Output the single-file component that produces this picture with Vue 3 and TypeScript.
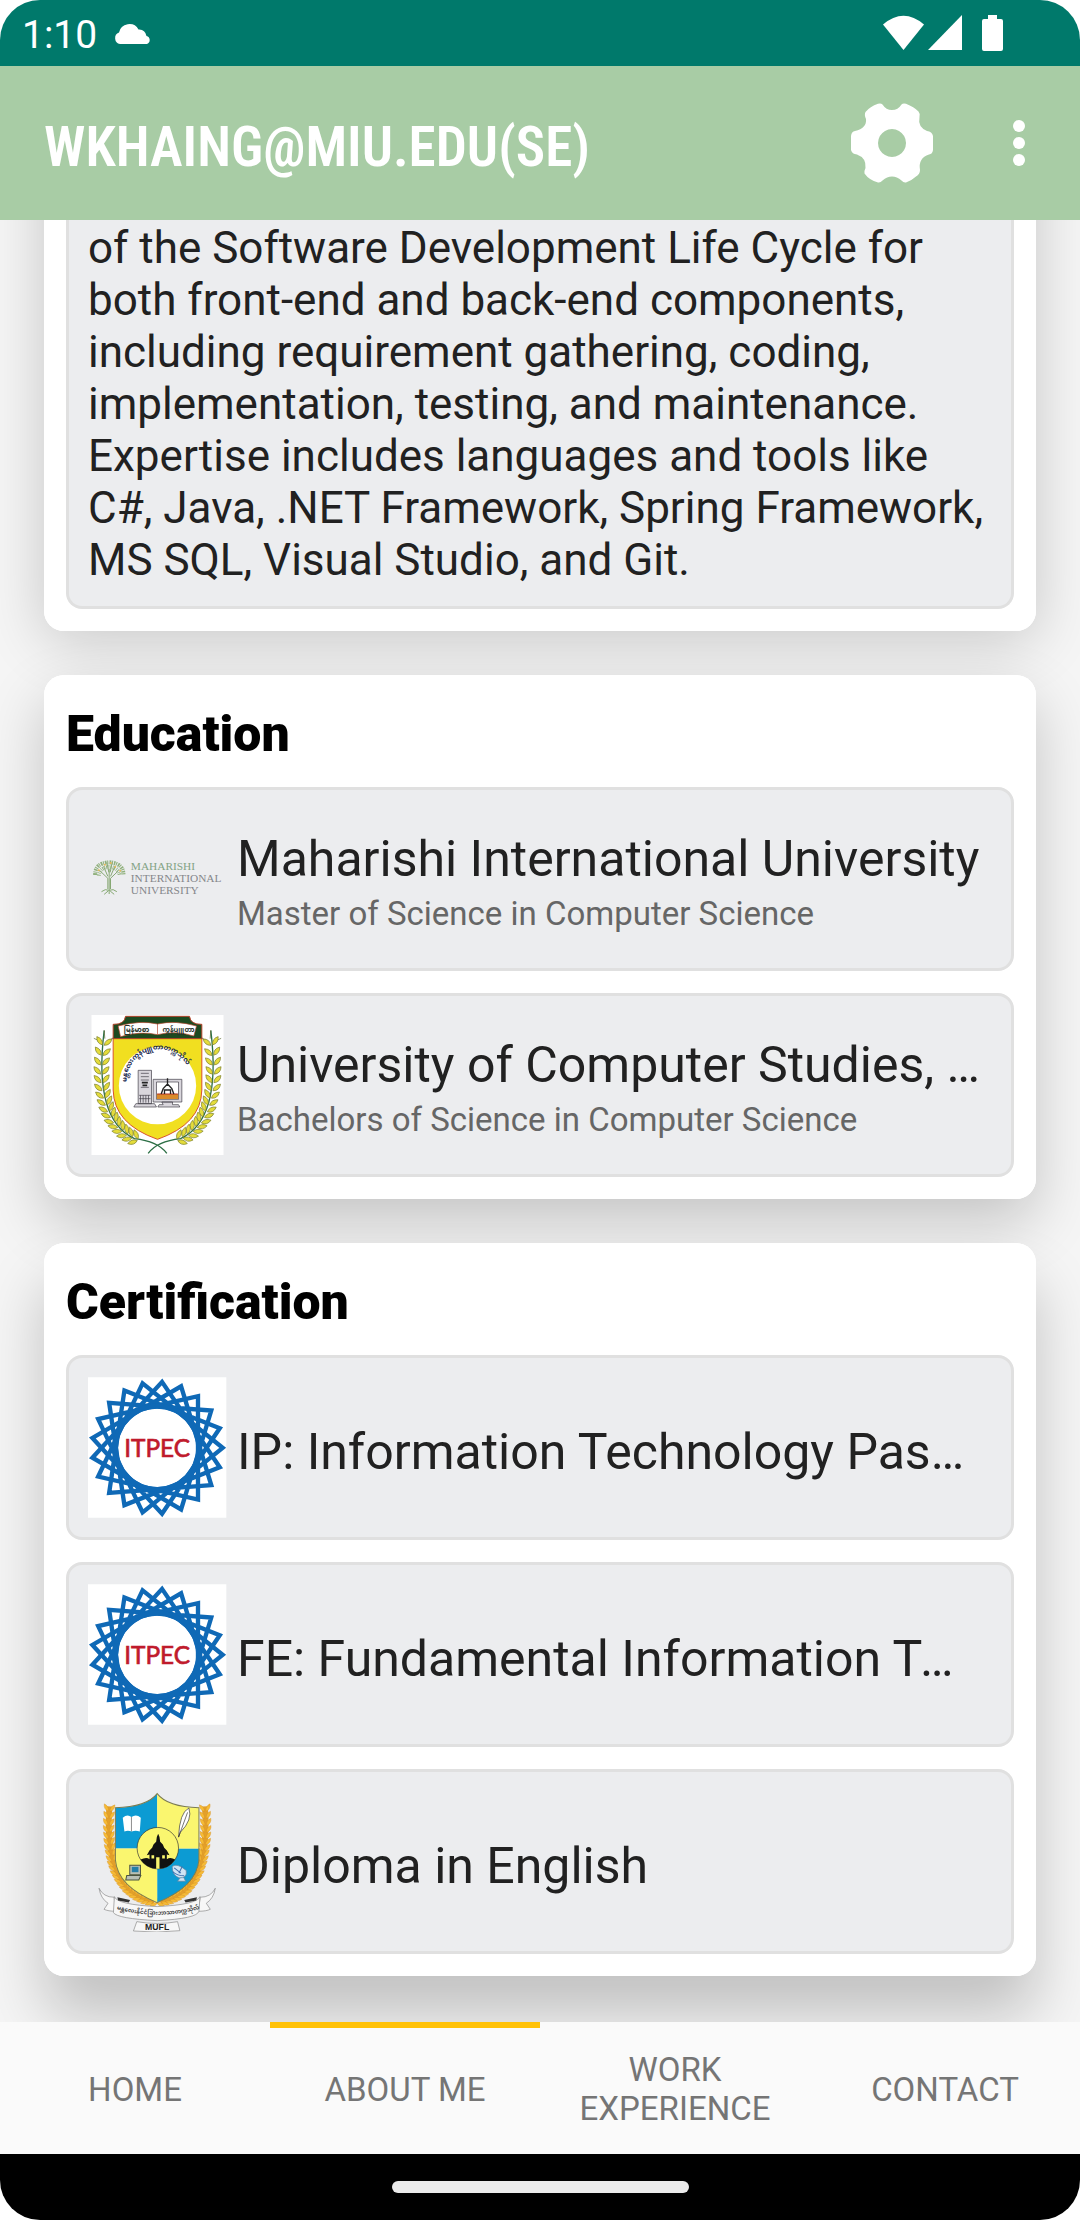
<script setup lang="ts">
import { ref } from 'vue'

interface Entry {
  logo: 'miu' | 'ucs' | 'itpec' | 'mufl'
  title: string
  detail?: string
}

interface Section {
  heading: string
  entries: Entry[]
}

const summary: string[] = [
  'of the Software Development Life Cycle for',
  'both front-end and back-end components,',
  'including requirement gathering, coding,',
  'implementation, testing, and maintenance.',
  'Expertise includes languages and tools like',
  'C#, Java, .NET Framework, Spring Framework,',
  'MS SQL, Visual Studio, and Git.',
]

const sections: Section[] = [
  {
    heading: 'Education',
    entries: [
      { logo: 'miu', title: 'Maharishi International University', detail: 'Master of Science in Computer Science' },
      { logo: 'ucs', title: 'University of Computer Studies, Mandalay', detail: 'Bachelors of Science in Computer Science' },
    ],
  },
  {
    heading: 'Certification',
    entries: [
      { logo: 'itpec', title: 'IP: Information Technology Passport' },
      { logo: 'itpec', title: 'FE: Fundamental Information Technology Engineer' },
      { logo: 'mufl', title: 'Diploma in English' },
    ],
  },
]

const tabs: string[] = ['HOME', 'ABOUT ME', 'WORK EXPERIENCE', 'CONTACT']
const active = ref(1)

// ITPEC mark: three interlaced heptagrams, 21 tips in all
const heptagrams: string[] = [0, 1, 2].map((g) =>
  Array.from({ length: 7 }, (_, i) => {
    const a = ((g + i * 6) * 2 * Math.PI) / 21
    return `${(207 + 196 * Math.cos(a)).toFixed(1)},${(211 + 198 * Math.sin(a)).toFixed(1)}`
  }).join(' '),
)

interface Leaf { x: number; y: number; r: number }

// Points along a quadratic curve with a pair of leaves at each of them
function wreath(p: number[], n: number, spread: number, gap: number): Leaf[] {
  const out: Leaf[] = []
  for (let i = 0; i < n; i++) {
    const t = i / (n - 1)
    const u = 1 - t
    const x = u * u * p[0] + 2 * u * t * p[2] + t * t * p[4]
    const y = u * u * p[1] + 2 * u * t * p[3] + t * t * p[5]
    const dx = 2 * u * (p[2] - p[0]) + 2 * t * (p[4] - p[2])
    const dy = 2 * u * (p[3] - p[1]) + 2 * t * (p[5] - p[3])
    const a = Math.atan2(dy, dx)
    for (const s of [-1, 1]) {
      out.push({
        x: Math.round(x - Math.sin(a) * gap * s),
        y: Math.round(y + Math.cos(a) * gap * s),
        r: Math.round((a * 180) / Math.PI + 180 - spread * s),
      })
    }
  }
  return out
}

const ucsLeaves = wreath([70, 125, 38, 360, 162, 415], 16, 42, 12)
const muflLeaves = wreath([88, 95, 70, 350, 222, 374], 24, 32, 9)
</script>

<template>
  <div class="screen">
    <header class="status">
      <span class="clock">1:10</span>
      <svg class="cloud" viewBox="0 0 37 21"><path d="M6 21A6 6 0 0 1 5 9.500A10.500 10.500 0 0 1 24.500 6.500Q31 6 32.500 13A4.200 4.200 0 0 1 33 21Z" fill="#fff" /></svg>
      <svg class="signals" viewBox="0 0 120 37" fill="#fff">
        <path d="M0 9.500Q20.500 -8 41 9.500L20.500 35Z" />
        <path d="M79 0V35H45Z" />
        <path d="M105 0h9v4h4q2 0 2 2v28q0 2 -2 2h-17q-2 0 -2 -2v-28q0 -2 2 -2h4z" />
      </svg>
    </header>

    <div class="appbar">
      <h1>WKHAING@MIU.EDU(SE)</h1>
      <button class="icon gear" aria-label="Settings">
        <svg viewBox="0 0 82 80">
          <path fill="#fff" fill-rule="evenodd" d="M27 0.800Q30 0 31.500 1.500Q35 7 41 7T50.500 1.500Q52 0 55 0.800Q63 4 67.500 8.500Q69.500 11 68.500 14Q66.500 24 76 28Q81 28.500 82 33V47Q81.500 51 78 51.500Q67 55 69 67Q69 71 65 73.500Q60 78 55 79.500Q52.500 80 50.500 77.500Q46 73.500 41 73.500T31.500 77.500Q29.500 80 27 79.500Q18 77 13.500 70.500Q13 68 14.500 65Q15.500 55 6 51.500Q1 51 0 47V33Q0.500 28.500 4 28Q16 25 15 16Q13 12 14.500 9Q19 3.500 27 0.800ZM41 26a14 14 0 1 0 .01 0z" />
        </svg>
      </button>
      <button class="icon more" aria-label="More options">
        <svg viewBox="0 0 12 46" fill="#fff"><circle cx="6" cy="6" r="6" /><circle cx="6" cy="23" r="6" /><circle cx="6" cy="40" r="6" /></svg>
      </button>
    </div>

    <main class="content">
      <section class="card scrolled">
        <p class="box summary"><span v-for="line in summary" :key="line">{{ line }}</span></p>
      </section>

      <section v-for="s in sections" :key="s.heading" class="card">
        <h2>{{ s.heading }}</h2>
        <ul>
          <li v-for="e in s.entries" :key="e.title" class="box entry">
            <svg v-if="e.logo === 'miu'" class="logo" viewBox="22 0 416 420" role="img" aria-label="Maharishi International University">
              <g transform="translate(0 90)">
                <g fill="none" stroke="#86a873" stroke-width="3">
                  <path d="M85 165V90M81 150V118L58 96M89 150V118L112 96M81 112L68 82M89 112L102 82M84 100L78 70M88 100L94 70" />
                  <path d="M62 158q12 -10 22 -4q14 -6 24 4M70 166l12 -10M100 166l-12 -10" />
                </g>
                <g fill="none" stroke="#8fb07c" stroke-width="12" stroke-dasharray="5 2 3 3">
                  <path d="M43 108Q42 72 85 70Q128 72 128 108" />
                  <path d="M54 110Q56 86 85 84Q114 86 117 110" stroke-dasharray="3 4 2 3" />
                </g>
                <g fill="#e5b95a"><circle cx="54" cy="94" r="3" /><circle cx="72" cy="77" r="3" /><circle cx="90" cy="72" r="3" /><circle cx="103" cy="83" r="3" /><circle cx="118" cy="95" r="3" /></g>
                <g class="serif" font-size="34">
                  <text x="150" y="92" fill="#83a384">MAHARISHI</text>
                  <text x="150" y="128" fill="#85878b">INTERNATIONAL</text>
                  <text x="150" y="164" fill="#85878b">UNIVERSITY</text>
                </g>
              </g>
            </svg>

            <svg v-else-if="e.logo === 'ucs'" class="logo" viewBox="23 45 416 420" role="img" aria-label="University of Computer Studies">
              <path fill="#fff" d="M33 45h396v420h-396z" />
              <path d="M98 112H364V270Q362 372 231 418Q100 372 98 270Z" fill="#f1df20" stroke="#d9522b" stroke-width="3" />
              <path d="M98 116V73Q132 74 135 49H327Q330 74 364 73V116Z" fill="#1d4a20" stroke="#b5432a" stroke-width="3" />
              <path d="M113 78Q180 60 231 72Q285 60 348 78L340 108Q285 90 231 104Q180 92 120 110Z" fill="#fff" stroke="#b5432a" stroke-width="2" />
              <path d="M231 72V104" stroke="#b5432a" stroke-width="2" />
              <g class="burmese" font-size="20" font-weight="700" fill="#26332c">
                <text x="130" y="97">မြန်မာစာ</text>
                <text x="246" y="95">ကွန်ပျူတာ</text>
              </g>
              <circle cx="231" cy="257" r="116" fill="#fff" />
              <path id="ucs-arc" d="M138 246A98 98 0 0 1 334 246" fill="none" />
              <text class="burmese" font-size="20" font-weight="700" fill="#16264f"><textPath href="#ucs-arc">မန္တလေးကွန်ပျူတာတက္ကသိုလ်</textPath></text>
              <g fill="#d9d6dc" stroke="#3c3a44" stroke-width="2">
                <path d="M173 211h40v100h-40zM166 311h56l6 10h-68zM218 238h86v68h-86zM244 306h32v8h18l4 7h-66l4 -7h12z" />
                <path d="M228 246h66v52h-66z" fill="#fff" />
                <path d="M181 220h24M181 230h24M181 240h24M181 262h24M176 286h34M176 296h34M180 286v22M188 286v22M196 286v22M204 286v22" />
              </g>
              <path d="M184 248h18M186 256h14" stroke="#222" stroke-width="5" />
              <path d="M229 282h64v15h-64z" fill="#d98b2b" />
              <path d="M230 282h62" stroke="#b32d20" stroke-width="3" />
              <path d="M261 235v20M242 282l6 -16 13 -14 13 14 6 16M252 282v-12h18v12" fill="none" stroke="#222" stroke-width="4" />
              <g v-for="side in [0, 1]" :key="side" :transform="side ? 'translate(462 0) scale(-1 1)' : ''">
                <path d="M71 92Q38 360 162 416Q232 424 259 460" fill="none" stroke="#2c6f45" stroke-width="4" />
                <path d="M71 90l2 26M40 115l22 10M98 115l-18 8" stroke="#55632a" stroke-width="2" />
                <path v-for="(l, i) in ucsLeaves" :key="i" d="M-14 0Q0 -13 16 0Q0 12 -14 0Z" :transform="`translate(${l.x} ${l.y}) rotate(${l.r})`" fill="#e4dc3a" stroke="#7d8130" stroke-width="2" />
              </g>
            </svg>

            <svg v-else-if="e.logo === 'itpec'" class="logo" viewBox="0 0 416 420" role="img" aria-label="ITPEC">
              <path fill="#fff" d="M0 0h414v420H0z" />
              <g fill="none" stroke="#0f69b6" stroke-width="13">
                <polygon v-for="h in heptagrams" :key="h" :points="h" />
                <circle cx="207" cy="211" r="125" stroke-width="16" />
              </g>
              <text class="humanist" x="207" y="237" font-size="73" text-anchor="middle" fill="#c01a2c" stroke="#c01a2c" stroke-width="2">ITPEC</text>
            </svg>

            <svg v-else class="logo" viewBox="24 45 416 420" role="img" aria-label="MUFL">
              <g v-for="side in [0, 1]" :key="side" :transform="side ? 'translate(462 0) scale(-1 1)' : ''">
                <path d="M88 90Q70 350 222 374" fill="none" stroke="#e3a02a" stroke-width="18" />
                <path v-for="(l, i) in muflLeaves" :key="i" d="M-12 0Q0 -10 13 0Q0 9 -12 0Z" :transform="`translate(${l.x} ${l.y}) rotate(${l.r})`" fill="#f6bb35" stroke="#d08a22" stroke-width="1" />
              </g>
              <clipPath id="mufl-shield"><path d="M231 52Q262 92 356 94V250Q350 330 231 378Q112 330 106 250V94Q200 92 231 52Z" /></clipPath>
              <g clip-path="url(#mufl-shield)">
                <path d="M100 45h131v171H100zM231 216h131v170H231z" fill="#0c9bd3" />
                <path d="M231 45h131v171H231zM100 216h131v170H100z" fill="#faf66f" />
              </g>
              <path d="M231 52Q262 92 356 94V250Q350 330 231 378Q112 330 106 250V94Q200 92 231 52Z" fill="none" stroke="#7c7c50" stroke-width="3" />
              <circle cx="233" cy="215" r="62" fill="#faf66f" stroke="#333" stroke-width="2" />
              <path d="M181 249Q200 240 208 248V234L200 236 208 222 216 214 220 204 228 196 230 182 234 172 238 182 240 196 248 204 252 214 260 222 268 236 260 234V248Q270 240 285 249Q266 277 233 277Q198 276 181 249Z" fill="#111" />
              <path d="M228 242h10v35h-10zM214 236h8v10h-8zM246 236h8v10h-8z" fill="#faf66f" />
              <path d="M128 124q14 -12 26 -2q14 -10 28 2l-3 41q-13 -4 -24 0q-12 -4 -22 0z" fill="#fff" />
              <path d="M154 122v43" stroke="#555" stroke-width="2" />
              <path d="M295 182Q298 108 326 95Q338 130 300 168Z" fill="#fff" stroke="#333" stroke-width="2" />
              <path d="M295 182L322 108" stroke="#333" stroke-width="2" />
              <path d="M149 266h32v29h-32zM140 297h42l-6 13h-39z" fill="#b9c0b4" stroke="#4b5440" stroke-width="3" />
              <path d="M155 271h20v16h-20z" fill="#247fa8" />
              <path d="M276 270Q290 258 318 282Q322 306 296 304Q276 296 276 270ZM300 304l-8 10h24l-6 -12" fill="#cfe4f5" stroke="#64809b" stroke-width="2" />
              <path d="M282 274L302 290M278 286Q292 298 312 298M306 270L296 290" stroke="#3e6fae" stroke-width="3" fill="none" />
              <g fill="#f7f7f7" stroke="#888" stroke-width="2">
                <path d="M57 335Q70 362 102 362L108 404Q84 404 72 398L84 380Q62 366 57 335ZM405 335Q392 362 360 362L354 404Q378 404 390 398L378 380Q400 366 405 335Z" />
                <path d="M103 360Q110 384 231 390Q352 384 359 360L356 404Q350 426 231 432Q112 426 100 408Z" />
                <path d="M170 435Q231 446 292 435L299 462Q231 470 160 463Z" />
              </g>
              <path d="M112 362l38 8 -4 8 -32 -6zM350 362l-38 8 4 8 32 -6z" fill="#333" />
              <path id="mufl-arc" d="M110 398Q231 430 356 398" fill="none" />
              <text class="burmese" font-size="17" font-weight="700" fill="#444"><textPath href="#mufl-arc">မန္တလေးနိုင်ငံခြားဘာသာတက္ကသိုလ်</textPath></text>
              <text class="sans" x="231" y="461" font-size="26" font-weight="700" text-anchor="middle" fill="#222">MUFL</text>
            </svg>

            <div class="labels">
              <h3>{{ e.title }}</h3>
              <p v-if="e.detail">{{ e.detail }}</p>
            </div>
          </li>
        </ul>
      </section>
    </main>

    <nav class="tabs">
      <a v-for="(t, i) in tabs" :key="t" href="#" :class="{ active: active === i }" @click.prevent="active = i">{{ t }}</a>
    </nav>
    <footer class="gesture"><span></span></footer>
  </div>
</template>

<style>
body { margin: 0; background: #fff; }
</style>

<style scoped>
* { box-sizing: border-box; }
h1, h2, h3, p, ul { margin: 0; padding: 0; font-weight: 400; }
ul { list-style: none; display: flex; flex-direction: column; gap: 22px; }
button { border: 0; background: none; padding: 0; cursor: pointer; }

.screen {
  display: flex;
  flex-direction: column;
  min-height: 100vh;
  overflow: hidden;
  border-radius: 40px;
  background: #f5f5f5;
  font-family: Roboto, sans-serif;
  color: #212121;
}
.status {
  display: flex;
  align-items: center;
  height: 66px;
  padding: 0 77px 0 22px;
  background: #00796b;
  color: #fff;
}
.clock { padding-top: 4px; font-size: 39px; line-height: 48px; }
.cloud { width: 37px; height: 21px; margin-left: 17px; }
.signals { width: 120px; height: 37px; margin-left: auto; }

.appbar {
  display: flex;
  align-items: center;
  height: 154px;
  padding: 0 55px 0 44px;
  background: #a8cca5;
  color: #fff;
}
h1 {
  flex: 1;
  padding-top: 8px;
  font-family: "Roboto Condensed", Roboto, sans-serif;
  font-size: 55px;
  line-height: 64px;
  font-weight: 600;
}
.icon svg { display: block; }
.gear svg { width: 82px; height: 80px; }
.more { margin-left: 80px; }
.more svg { width: 12px; height: 46px; }

.content {
  position: relative;
  z-index: 0;
  flex: 1;
  display: flex;
  flex-direction: column;
  gap: 44px;
  padding: 0 44px 45px;
  overflow: hidden;
}
.card {
  position: relative;
  padding: 22px;
}
/* Shadows sit on a layer below every card surface, so none falls on a neighbour */
.card::before, .card::after {
  content: "";
  position: absolute;
  inset: 0;
  z-index: -1;
  border-radius: 20px;
  background: #fff;
}
.card::before { z-index: -2; box-shadow: 0 24px 60px rgba(0, 0, 0, 0.2); }
.card:last-child::before { box-shadow: 0 40px 60px rgba(0, 0, 0, 0.21); }
.scrolled { padding-top: 0; }
.scrolled::before { inset: -100px 0 0; box-shadow: 0 10px 60px rgba(0, 0, 0, 0.19); }
.scrolled::after { border-radius: 0 0 20px 20px; }
h2 {
  height: 68px;
  margin-bottom: 22px;
  font-size: 50px;
  line-height: 74px;
  font-weight: 900;
  color: #000;
}
.box {
  border: 3px solid #e0e0e0;
  border-radius: 16px;
  background: #ecedef;
}
.summary {
  padding: 2px 19px 20px;
  border-top: 0;
  border-radius: 0 0 16px 16px;
  font-size: 44px;
  line-height: 52px;
}
.summary span { display: block; white-space: nowrap; }
.entry {
  display: flex;
  align-items: center;
  gap: 10px;
  padding: 19px;
}
.logo { flex: none; display: block; width: 139px; height: 140px; }
.card:last-child .logo { height: 141px; }
.labels { flex: 1; min-width: 0; padding-top: 8px; }
.card:last-child .labels { padding-right: 20px; }
h3 {
  overflow: hidden;
  white-space: nowrap;
  text-overflow: ellipsis;
  font-size: 50px;
  line-height: 58px;
}
.labels p { font-size: 33px; line-height: 44px; padding-top: 4px; color: #666; }
.serif { font-family: "Liberation Serif", serif; }
.humanist { font-family: Lato, sans-serif; }
.sans { font-family: "Liberation Sans", sans-serif; }
.burmese { font-family: "Noto Sans Myanmar", "Noto Sans", sans-serif; }

.tabs {
  display: grid;
  grid-template-columns: repeat(4, minmax(0, 1fr));
  height: 132px;
  background: #fafafa;
}
.tabs a {
  display: flex;
  align-items: center;
  justify-content: center;
  padding: 2px 33px 0;
  font-size: 33px;
  line-height: 39px;
  text-align: center;
  text-decoration: none;
  color: #757575;
}
.tabs .active { box-shadow: inset 0 6px #ffc107; }
.gesture {
  display: flex;
  align-items: center;
  justify-content: center;
  height: 66px;
  background: #000;
}
.gesture span { width: 28%; max-width: 297px; height: 12px; border-radius: 6px; background: #ebebeb; }
</style>
